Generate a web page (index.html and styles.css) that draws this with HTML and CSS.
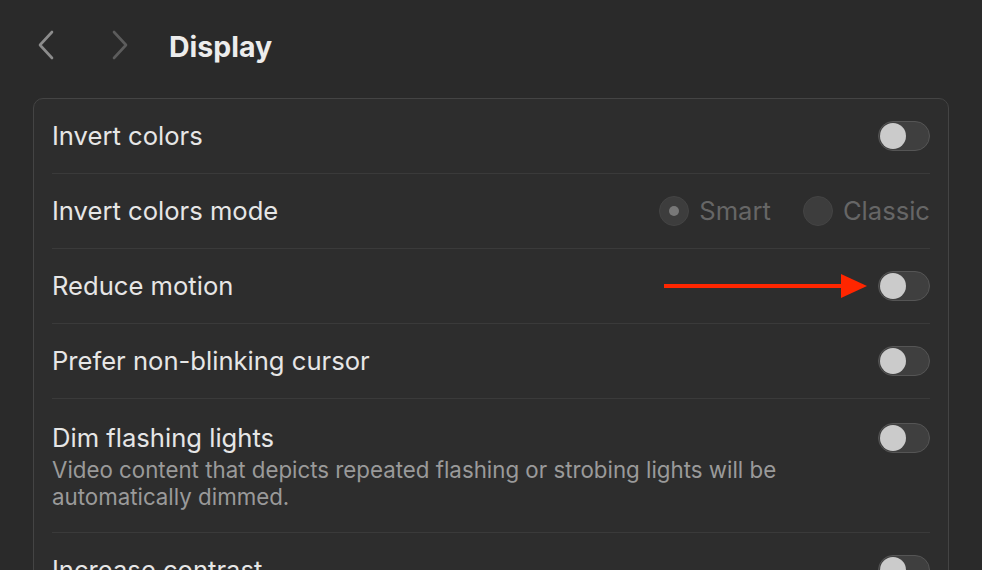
FILE: index.html
```html
<!DOCTYPE html>
<html lang="en">
<head>
    <meta charset="UTF-8">
    <title>Display</title>
    <link rel="stylesheet" href="styles.css">
</head>
<body>
    <div class="toolbar">
        <svg class="nav-btn back" width="20" height="30" viewBox="0 0 20 30">
            <path d="M16 2 L4 15 L16 28" />
        </svg>
        <svg class="nav-btn forward" width="20" height="30" viewBox="0 0 20 30">
            <path d="M4 2 L16 15 L4 28" />
        </svg>
        <h1>Display</h1>
    </div>

    <div class="card">
        <div class="row">
            <span class="label">Invert colors</span>
            <div class="toggle"><div class="knob"></div></div>
        </div>
        <div class="row">
            <span class="label">Invert colors mode</span>
            <div class="radios">
                <span class="radio checked"><span class="dot"></span></span>
                <span class="radio-label">Smart</span>
                <span class="radio"></span>
                <span class="radio-label">Classic</span>
            </div>
        </div>
        <div class="row">
            <span class="label">Reduce motion</span>
            <div class="controls">
                <svg class="arrow" width="204" height="26" viewBox="0 0 204 26">
                    <rect x="0" y="11" width="180" height="4" />
                    <polygon points="177,1 203,13 177,25" />
                </svg>
                <div class="toggle"><div class="knob"></div></div>
            </div>
        </div>
        <div class="row">
            <span class="label">Prefer non-blinking cursor</span>
            <div class="toggle"><div class="knob"></div></div>
        </div>
        <div class="row tall">
            <div class="text">
                <div class="label">Dim flashing lights</div>
                <div class="desc">Video content that depicts repeated flashing or strobing lights will be automatically dimmed.</div>
            </div>
            <div class="toggle"><div class="knob"></div></div>
        </div>
        <div class="row">
            <span class="label">Increase contrast</span>
            <div class="toggle"><div class="knob"></div></div>
        </div>
    </div>
</body>
</html>
```

FILE: styles.css
```css
html, body {
    height: 100%;
}

body {
    margin: 0;
    background-color: #2a2a2a;
    color: #e6e6e6;
    font-family: Inter, "Noto Sans", sans-serif;
    overflow: hidden;
}

.toolbar {
    display: flex;
    align-items: center;
    height: 90px;
    padding-left: 36px;
}

.nav-btn {
    fill: none;
    stroke-width: 2.6;
    stroke-linecap: round;
    stroke-linejoin: round;
}

.back {
    stroke: #8c8c8c;
}

.forward {
    stroke: #5c5c5c;
    margin-left: 54px;
}

h1 {
    margin: 2px 0 0 39px;
    font-size: 28.5px;
    font-weight: 700;
    color: #ececec;
}

.card {
    margin: 8px 0 0 33px;
    width: 916px;
    box-sizing: border-box;
    border: 1px solid #444444;
    border-radius: 10px;
    background-color: #2d2d2d;
    padding: 0 18px;
}

.row {
    display: flex;
    align-items: center;
    justify-content: space-between;
    padding: 22px 0;
    border-bottom: 1px solid #3a3a3a;
}

.row.tall {
    align-items: flex-start;
    padding: 24px 0 22px;
}

.label {
    font-size: 25.6px;
    line-height: 30px;
    color: #e6e6e6;
}

.desc {
    margin-top: 3px;
    font-size: 22.3px;
    line-height: 27px;
    color: #9a9a9a;
    max-width: 760px;
}

.toggle {
    width: 48px;
    height: 28px;
    flex-shrink: 0;
    border: 1px solid #555555;
    border-radius: 15px;
    background-color: #3f3f3f;
    display: flex;
    align-items: center;
    padding: 0 1px;
}

.knob {
    width: 26px;
    height: 26px;
    border-radius: 50%;
    background-color: #cbcbcb;
}

.controls {
    display: flex;
    align-items: center;
    gap: 10px;
}

.arrow {
    fill: #ff2600;
}

.radios {
    display: flex;
    align-items: center;
}

.radio {
    width: 28px;
    height: 28px;
    border-radius: 50%;
    border: 1px solid #444444;
    background-color: #3d3d3d;
    display: flex;
    align-items: center;
    justify-content: center;
    margin-left: 32px;
}

.radio.checked {
    margin-left: 0;
}

.dot {
    width: 10px;
    height: 10px;
    border-radius: 50%;
    background-color: #787878;
}

.radio-label {
    margin-left: 10px;
    font-size: 25.6px;
    line-height: 30px;
    color: #666666;
}
```
